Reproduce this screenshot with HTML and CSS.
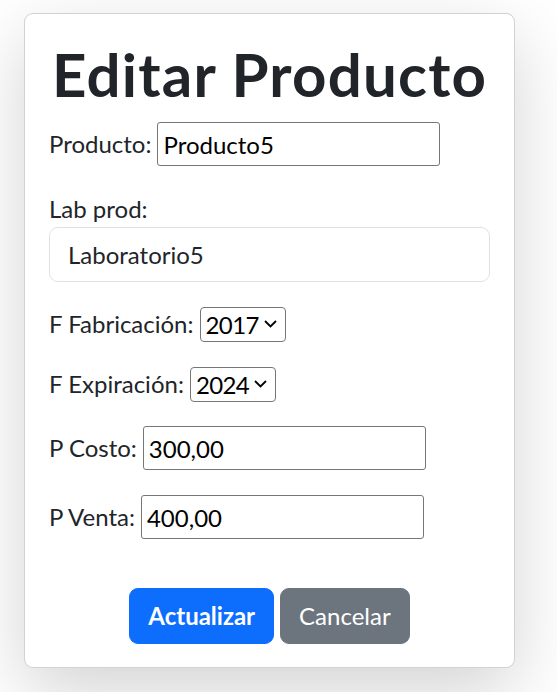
FILE: index.html
```html
<!DOCTYPE html>
<html lang="es">
<head>
<meta charset="utf-8">
<title>Editar Producto</title>
<link rel="stylesheet" href="styles.css">
</head>
<body>
<div class="card">
  <h1 class="title">Editar Producto</h1>
  <form class="form">
    <div class="row row-first">
      <label class="lbl" for="prod">Producto:</label>
      <input class="inp" id="prod" type="text" value="Producto5">
    </div>
    <div class="field">
      <label class="lbl block" for="lab">Lab prod:</label>
      <input class="form-control" id="lab" type="text" value="Laboratorio5">
    </div>
    <div class="row row-sel">
      <label class="lbl" for="ff">F Fabricación:</label>
      <select class="sel" id="ff"><option>2017</option></select>
    </div>
    <div class="row row-sel">
      <label class="lbl" for="fe">F Expiración:</label>
      <select class="sel" id="fe"><option>2024</option></select>
    </div>
    <div class="row">
      <label class="lbl" for="pc">P Costo:</label>
      <input class="inp" id="pc" type="text" value="300,00">
    </div>
    <div class="row">
      <label class="lbl" for="pv">P Venta:</label>
      <input class="inp" id="pv" type="text" value="400,00">
    </div>
    <div class="actions">
      <button type="button" class="btn btn-primary">Actualizar</button>
      <button type="button" class="btn btn-secondary">Cancelar</button>
    </div>
  </form>
</div>
</body>
</html>
```

FILE: styles.css
```css
* { box-sizing: border-box; }

html { background: #fff; }

body {
  margin: 0;
  padding: 13px 0 24px;
  background: #fff;
  font-family: Lato, "Open Sans", "Liberation Sans", sans-serif;
  font-size: 24px;
  line-height: 1.5;
  color: #212529;
}

.card {
  margin: 0 0 0 24px;
  width: 491px;
  border: 1.5px solid rgba(0, 0, 0, 0.175);
  border-radius: 9px;
  padding: 24px 24px 23px;
  background: #fff;
  box-shadow: 0 24px 72px rgba(0, 0, 0, 0.175);
}

.title {
  margin: 0 0 12px;
  font-size: 60px;
  line-height: 1.2;
  font-weight: 700;
  text-align: center;
  letter-spacing: 1.2px;
}

.form { margin: 0; }

.row {
  display: flex;
  align-items: center;
  gap: 6px;
  min-height: 44px;
  margin-bottom: 25px;
}

.row-first { margin-bottom: 25px; }

.row-sel {
  min-height: 36px;
  margin-bottom: 24px;
}

.lbl { line-height: 36px; }
.lbl.block { display: block; }

.field { margin-bottom: 24px; }

.inp {
  width: 283px;
  height: 44px;
  border: 1px solid #767676;
  border-radius: 3px;
  padding: 0 5px;
  font: inherit;
  color: #000;
  background: #fff;
}

.form-control {
  display: block;
  width: 100%;
  height: 55px;
  border: 1.5px solid #dee2e6;
  border-radius: 9px;
  padding: 8px 18px;
  font: inherit;
  color: #212529;
  background: #fff;
}

.sel {
  appearance: none;
  -webkit-appearance: none;
  width: 86px;
  height: 35px;
  border: 1px solid #767676;
  border-radius: 4px;
  padding: 0 24px 0 5px;
  font: inherit;
  letter-spacing: -0.6px;
  line-height: 33px;
  color: #000;
  background: #fff url("data:image/svg+xml,%3Csvg xmlns='http://www.w3.org/2000/svg' width='13' height='8' viewBox='0 0 13 8'%3E%3Cpath d='M1 1l5.5 5.5L12 1' fill='none' stroke='%23000' stroke-width='1.8'/%3E%3C/svg%3E") no-repeat right 8px center;
}

.actions {
  display: flex;
  justify-content: center;
  gap: 6px;
  padding-top: 24px;
}

.btn {
  height: 56px;
  font: inherit;
  line-height: 36px;
  padding: 9px 18px;
  border: 1px solid transparent;
  border-radius: 9px;
  color: #fff;
  cursor: pointer;
}

.btn-primary {
  background: #0d6efd;
  border-color: #0d6efd;
  font-weight: 700;
}

.btn-secondary {
  background: #6c757d;
  border-color: #6c757d;
}
```
